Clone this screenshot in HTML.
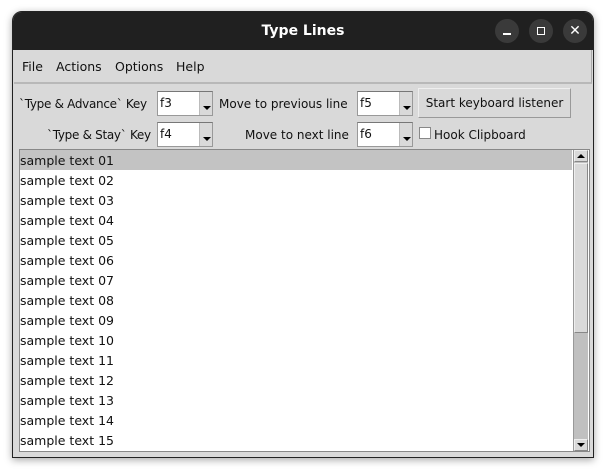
<!DOCTYPE html>
<html><head><style>
*{margin:0;padding:0;box-sizing:border-box}
body{width:606px;height:473px;background:#fff;position:relative;overflow:hidden;font-family:"DejaVu Sans","Liberation Sans",sans-serif;font-size:12px;color:#111}
.win{position:absolute;left:12px;top:11px;width:582px;height:447px;background:#d9d9d9;border:1px solid #222;border-radius:10px 10px 0 0;box-shadow:0 2px 8px rgba(0,0,0,.35);overflow:hidden}
.title{position:absolute;left:0;top:0;width:100%;height:38px;background:#202020;color:#fff;font-weight:bold;font-size:14px;text-align:center;line-height:38px}
.cb{position:absolute;top:7px;width:24px;height:24px;border-radius:12px;background:#3a3a3a}
.menu{position:absolute;left:1px;top:38px;width:578px;height:34px;border-bottom:2px solid #b8b8b8;border-right:1px solid #aaa;font-size:12.5px}
.menu span{position:absolute;top:9px}
.a{position:absolute;white-space:nowrap}
.combo{position:absolute;width:56px;height:25px;background:#fff;border:1px solid #999;border-top-color:#777;padding-left:2px;line-height:23px}
.combo i{position:absolute;right:0;top:0;width:13px;height:23px;background:#d9d9d9;border-left:1px solid #bbb}
.combo i:after{content:"";position:absolute;left:3px;bottom:5px;border-left:4px solid transparent;border-right:4px solid transparent;border-top:4px solid #000}
.btn{position:absolute;left:405px;top:76px;width:153px;height:30px;border:1px solid #999;border-top-color:#eee;border-left-color:#eee;line-height:28px;text-align:center}
.list{position:absolute;left:6px;top:137px;width:571px;height:303px;background:#fff;border:1px solid #888;font-size:12.5px}
.row{height:20px;line-height:22px;padding-left:0;width:552px}
.sb{position:absolute;right:1px;top:0;width:15px;height:301px;background:#c0c0c0;border-left:1px solid #999}
</style></head><body>
<div class="win">
<div class="title">Type Lines
<div class="cb" style="left:482px"><div style="position:absolute;left:8px;top:14px;width:8px;height:1.5px;background:#fff"></div></div>
<div class="cb" style="left:516px"><div style="position:absolute;left:8px;top:8px;width:8px;height:8px;border:1.5px solid #fff"></div></div>
<div class="cb" style="left:550px;font-weight:normal;font-size:14px;line-height:24px">✕</div>
</div>
<div class="menu"><span style="left:8px">File</span><span style="left:42px">Actions</span><span style="left:101px">Options</span><span style="left:162px">Help</span></div>
<div class="a" style="left:6px;top:85px;letter-spacing:-0.3px">`Type &amp; Advance` Key</div>
<div class="combo" style="left:144px;top:79px">f3<i></i></div>
<div class="a" style="left:206px;top:85px">Move to previous line</div>
<div class="combo" style="left:344px;top:79px">f5<i></i></div>
<div class="btn">Start keyboard listener</div>
<div class="a" style="left:34px;top:116px;letter-spacing:-0.3px">`Type &amp; Stay` Key</div>
<div class="combo" style="left:144px;top:110px">f4<i></i></div>
<div class="a" style="left:232px;top:116px">Move to next line</div>
<div class="combo" style="left:344px;top:110px">f6<i></i></div>
<div style="position:absolute;left:406px;top:115px;width:12px;height:12px;background:#fff;border:1px solid #888"></div>
<div class="a" style="left:421px;top:116px">Hook Clipboard</div>
<div class="list">
<div class="row" style="background:#c3c3c3">sample text 01</div>
<div class="row">sample text 02</div><div class="row">sample text 03</div><div class="row">sample text 04</div><div class="row">sample text 05</div><div class="row">sample text 06</div><div class="row">sample text 07</div><div class="row">sample text 08</div><div class="row">sample text 09</div><div class="row">sample text 10</div><div class="row">sample text 11</div><div class="row">sample text 12</div><div class="row">sample text 13</div><div class="row">sample text 14</div><div class="row">sample text 15</div>
<div class="sb">
<div style="position:absolute;left:0;top:0;width:14px;height:12px;background:#d9d9d9;border:1px solid #888;border-top-color:#eee;border-left-color:#eee"><div style="position:absolute;left:2px;top:3px;border-left:4px solid transparent;border-right:4px solid transparent;border-bottom:4px solid #000"></div></div>
<div style="position:absolute;left:0;top:13px;width:14px;height:170px;background:#d9d9d9;border:1px solid #888;border-top-color:#eee;border-left-color:#eee"></div>
<div style="position:absolute;left:0;bottom:0;width:14px;height:12px;background:#d9d9d9;border:1px solid #888;border-top-color:#eee;border-left-color:#eee"><div style="position:absolute;left:2px;top:3px;border-left:4px solid transparent;border-right:4px solid transparent;border-top:4px solid #000"></div></div>
</div>
</div>
</div>
</body></html>
